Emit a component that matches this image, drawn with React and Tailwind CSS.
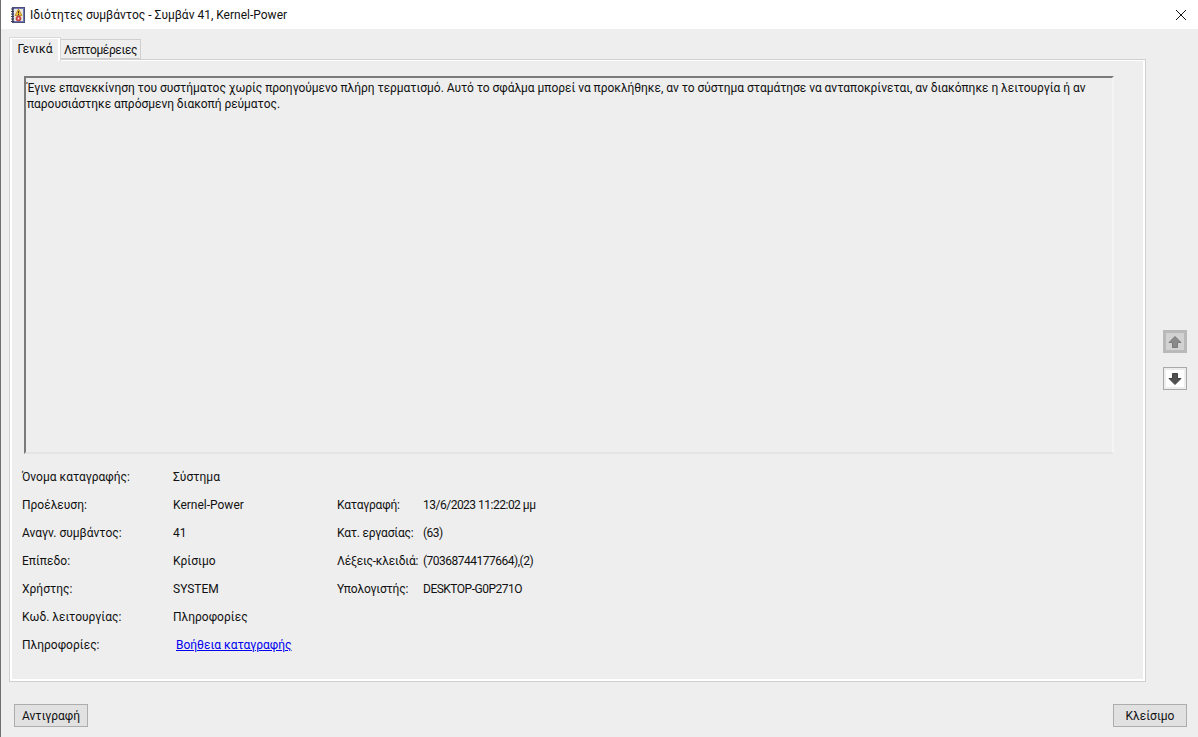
const rows = [
  ["Όνομα καταγραφής:", "Σύστημα", "", ""],
  ["Προέλευση:", "Kernel-Power", "Καταγραφή:", "13/6/2023 11:22:02 μμ"],
  ["Αναγν. συμβάντος:", "41", "Κατ. εργασίας:", "(63)"],
  ["Επίπεδο:", "Κρίσιμο", "Λέξεις-κλειδιά:", "(70368744177664),(2)"],
  ["Χρήστης:", "SYSTEM", "Υπολογιστής:", "DESKTOP-G0P271O"],
  ["Κωδ. λειτουργίας:", "Πληροφορίες", "", ""],
];

function EventIcon() {
  return (
    <svg width="16" height="16" viewBox="0 0 16 16">
      <rect x="2.5" y="0.5" width="12" height="15" fill="#6f78b4" stroke="#4a4f7a" />
      <rect x="4" y="2" width="9" height="12" fill="#ece8d8" />
      <path d="M1 2h3M1 4.5h3M1 7h3M1 9.5h3M1 12h3M1 14.5h3" stroke="#3c3c46" strokeWidth="1" />
      <path d="M8.5 2 L12 8.5 H5 Z" fill="#f2c335" stroke="#a8761a" strokeWidth="0.7" />
      <rect x="8" y="4" width="1" height="2.5" fill="#5a2a10" />
      <rect x="8" y="7" width="1" height="1" fill="#5a2a10" />
      <circle cx="8.5" cy="11.5" r="2.5" fill="#d84a4a" stroke="#9c2020" strokeWidth="0.6" />
      <circle cx="8.5" cy="11.5" r="0.9" fill="#f6e6e6" />
    </svg>
  );
}

function ArrowIcon({ down, color, edge }) {
  return (
    <svg width="14" height="14" viewBox="0 0 14 14">
      <path
        d={down ? "M4.5 1.5h5v5h3.5L7 12.5 1 6.5h3.5z" : "M4.5 12.5h5v-5h3.5L7 1.5 1 7.5h3.5z"}
        fill={color}
        stroke={edge}
        strokeWidth="1"
      />
    </svg>
  );
}

export default function App() {
  return (
    <div className="h-[737px] w-[1198px] overflow-hidden border-l border-[#6f6f6f] bg-[#eeeeee] text-[12px] leading-[16px] text-[#111111] font-['Roboto','Noto_Sans',sans-serif]">
      <div className="-ml-px flex h-[29px] items-center justify-between bg-white pl-[10px] pr-[12px]">
        <div className="flex items-center gap-[4px]">
          <EventIcon />
          <span>Ιδιότητες συμβάντος - Συμβάν 41, Kernel-Power</span>
        </div>
        <svg width="10" height="10" viewBox="0 0 10 10">
          <path d="M0 0L10 10M10 0L0 10" stroke="#111" strokeWidth="1" />
        </svg>
      </div>

      <div className="flex">
        <div className="ml-[8px] mt-[8px] w-[1137px]">
          <div className="relative z-10 flex h-[23px] items-start">
            <div className="h-[24px] w-[52px] border border-b-0 border-[#d9d9d9]">
              <div className="flex h-[23px] items-center justify-center border-x-2 border-t border-white bg-[#eeeeee] pb-[3px]">
                Γενικά
              </div>
            </div>
            <div className="mt-[2px] flex h-[20px] w-[80px] items-center justify-center border border-l-0 border-[#cfcfcf] bg-[#eeeeee] pt-[2px] tracking-[-0.4px]">
              Λεπτομέρειες
            </div>
          </div>
          <div className="-mt-px h-[623px] border border-[#d0d0d0]">
            <div className="h-[621px] border-x-2 border-b-2 border-t border-white pl-[12px] pt-[15px]">
              <div className="h-[378px] w-[1090px] border-2 border-b-[#e4e4e4] border-l-[#7a7a7a] border-r-[#f4f4f4] border-t-[#7a7a7a] px-[1px] py-[2px]">
                <p className="w-[1075px] tracking-[-0.04px]">
                  Έγινε επανεκκίνηση του συστήματος χωρίς προηγούμενο πλήρη τερματισμό. Αυτό το σφάλμα μπορεί να προκλήθηκε, αν το σύστημα σταμάτησε να ανταποκρίνεται, αν διακόπηκε η λειτουργία ή αν παρουσιάστηκε απρόσμενη διακοπή ρεύματος.
                </p>
              </div>
              <div className="mt-[9px] flex flex-col">
                {rows.map((r) => (
                  <div key={r[0]} className="flex h-[28px] items-center">
                    <div className="-ml-[2px] w-[151px]">{r[0]}</div>
                    <div className="w-[164px]">{r[1]}</div>
                    <div className="w-[86px] tracking-[-0.2px]">{r[2]}</div>
                    <div className="tracking-[-0.5px]">{r[3]}</div>
                  </div>
                ))}
                <div className="flex h-[28px] items-center">
                  <div className="-ml-[2px] w-[154px]">Πληροφορίες:</div>
                  <a className="text-[#0000ee] underline">Βοήθεια καταγραφής</a>
                </div>
              </div>
            </div>
          </div>
        </div>
        <div className="ml-[17px] mt-[301px] flex flex-col gap-[14px]">
          <div className="flex h-[23px] w-[24px] items-center justify-center border-[3px] border-[#b9b9b9] bg-[#d2d2d2]">
            <ArrowIcon color="#8a8a8a" edge="#7a7a7a" />
          </div>
          <div className="flex h-[23px] w-[24px] items-center justify-center border border-[#a8a8a8] bg-[#eeeeee] p-[2px]">
            <span className="flex h-full w-full items-center justify-center bg-white">
              <ArrowIcon down color="#505050" edge="#404040" />
            </span>
          </div>
        </div>
      </div>

      <div className="mt-[22px] flex justify-between pl-[13px] pr-[11px]">
        <button className="h-[23px] w-[74px] border border-[#adadad] bg-[#e1e1e1]">Αντιγραφή</button>
        <button className="h-[23px] w-[74px] border border-[#adadad] bg-[#e1e1e1]">Κλείσιμο</button>
      </div>
    </div>
  );
}
